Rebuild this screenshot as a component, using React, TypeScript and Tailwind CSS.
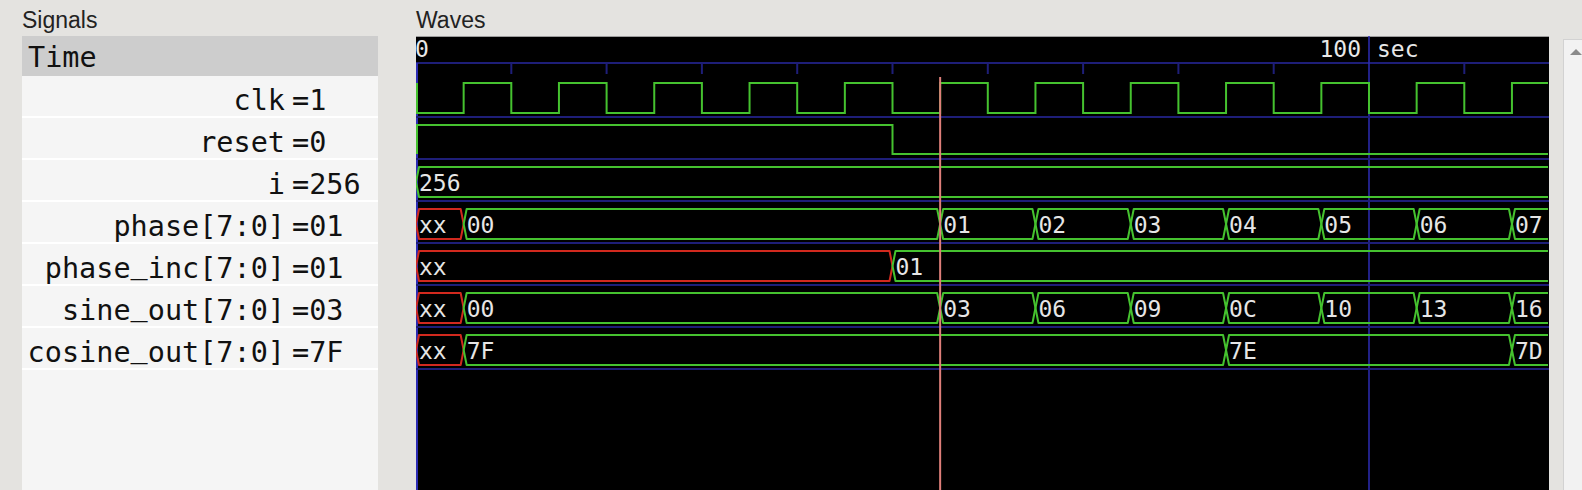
import React from "react";

// time scale of the wave view: 0 sec sits at x=416, 100 sec at x=1369
const X0 = 416;
const XEND = 1548;
const PX_PER_SEC = 9.53;
const tx = (t: number) => X0 + t * PX_PER_SEC;

const GREEN = "#45c22f";
const RED = "#d2291e";
const SEP = "#1e1e78";
const MAJOR = "#2c2cb4";
const CURSOR = "#df7f7a";
const MONO = "DejaVu Sans Mono, monospace";

const ROW_TOP = 76;
const ROW_H = 42;

type Seg = { t0: number; t1?: number; v: string; bad?: boolean };

const signals: { name: string; value: string }[] = [
  { name: "clk", value: "1" },
  { name: "reset", value: "0" },
  { name: "i", value: "256" },
  { name: "phase[7:0]", value: "01" },
  { name: "phase_inc[7:0]", value: "01" },
  { name: "sine_out[7:0]", value: "03" },
  { name: "cosine_out[7:0]", value: "7F" },
];

const counting = (start: number, vals: string[]): Seg[] =>
  vals.map((v, k) => ({
    t0: start + k * 10,
    t1: k === vals.length - 1 ? undefined : start + (k + 1) * 10,
    v,
  }));

const buses: { row: number; segs: Seg[] }[] = [
  { row: 2, segs: [{ t0: 0, v: "256" }] },
  {
    row: 3,
    segs: [
      { t0: 0, t1: 5, v: "xx", bad: true },
      { t0: 5, t1: 55, v: "00" },
      ...counting(55, ["01", "02", "03", "04", "05", "06", "07"]),
    ],
  },
  {
    row: 4,
    segs: [
      { t0: 0, t1: 50, v: "xx", bad: true },
      { t0: 50, v: "01" },
    ],
  },
  {
    row: 5,
    segs: [
      { t0: 0, t1: 5, v: "xx", bad: true },
      { t0: 5, t1: 55, v: "00" },
      ...counting(55, ["03", "06", "09", "0C", "10", "13", "16"]),
    ],
  },
  {
    row: 6,
    segs: [
      { t0: 0, t1: 5, v: "xx", bad: true },
      { t0: 5, t1: 85, v: "7F" },
      { t0: 85, t1: 115, v: "7E" },
      { t0: 115, v: "7D" },
    ],
  },
];

function Bus({ row, segs }: { row: number; segs: Seg[] }) {
  const top = ROW_TOP + row * ROW_H;
  const hi = top + 7;
  const lo = top + 37;
  const mid = top + 22;
  return (
    <g>
      {segs.map((s, i) => {
        const x0 = tx(s.t0);
        const x1 = s.t1 === undefined ? XEND : tx(s.t1);
        const d =
          s.t1 === undefined
            ? `M${x1},${hi} L${x0 + 3},${hi} L${x0},${mid} L${x0 + 3},${lo} L${x1},${lo}`
            : `M${x0},${mid} L${x0 + 3},${hi} L${x1 - 3},${hi} L${x1},${mid} L${x1 - 3},${lo} L${x0 + 3},${lo} Z`;
        return (
          <g key={i}>
            <path d={d} fill="none" stroke={s.bad ? RED : GREEN} strokeWidth={2} strokeLinejoin="round" />
            <text x={x0 + 3} y={mid + 8.5} fontSize={23} fontFamily={MONO} fill="#e6e6e6">
              {s.v}
            </text>
          </g>
        );
      })}
    </g>
  );
}

function clockPath() {
  const top = ROW_TOP;
  const hi = top + 7;
  const lo = top + 37;
  let d = `M${X0 + 1},${hi} L${X0 + 1},${lo}`;
  let level = lo;
  for (let t = 5; ; t += 5) {
    const x = tx(t);
    if (x > XEND) {
      d += ` L${XEND},${level}`;
      break;
    }
    const next = t % 10 === 5 ? hi : lo;
    d += ` L${x},${level} L${x},${next}`;
    level = next;
  }
  return d;
}

function resetPath() {
  const top = ROW_TOP + ROW_H;
  const hi = top + 7;
  const lo = top + 36;
  const x = tx(50);
  return `M${X0 + 1},${lo} L${X0 + 1},${hi} L${x},${hi} L${x},${lo} L${XEND},${lo}`;
}

function Waves() {
  const ticks = [10, 20, 30, 40, 50, 60, 70, 80, 90, 110];
  return (
    <svg width={1133} height={454} viewBox="416 36 1133 454" className="block">
      <rect x={416} y={36} width={1133} height={454} fill="#000" />
      <rect x={416} y={36} width={1133} height={1} fill="#9c9c9c" />

      {/* time axis */}
      <text x={X0 - 1} y={57} fontSize={23} fontFamily={MONO} fill="#e8e8e8">
        0
      </text>
      <text x={tx(100) - 8} y={57} fontSize={23} fontFamily={MONO} fill="#e8e8e8" textAnchor="end">
        100
      </text>
      <text x={tx(100) + 8} y={57} fontSize={23} fontFamily={MONO} fill="#e8e8e8">
        sec
      </text>
      <line x1={416} y1={63} x2={1549} y2={63} stroke={SEP} strokeWidth={2} />
      {ticks.map((t) => (
        <line key={t} x1={tx(t)} y1={63} x2={tx(t)} y2={74} stroke={SEP} strokeWidth={2} />
      ))}
      <line x1={417} y1={63} x2={417} y2={490} stroke={MAJOR} strokeWidth={2} />
      <line x1={tx(100)} y1={36} x2={tx(100)} y2={490} stroke={MAJOR} strokeWidth={1.5} />

      {/* row separators */}
      {signals.map((_, i) => (
        <line
          key={i}
          x1={416}
          y1={ROW_TOP + i * ROW_H + 41}
          x2={1549}
          y2={ROW_TOP + i * ROW_H + 41}
          stroke={SEP}
          strokeWidth={2}
        />
      ))}

      <path d={clockPath()} fill="none" stroke={GREEN} strokeWidth={2} />
      <path d={resetPath()} fill="none" stroke={GREEN} strokeWidth={2} />
      {buses.map((b) => (
        <Bus key={b.row} row={b.row} segs={b.segs} />
      ))}

      {/* marker */}
      <line x1={tx(55)} y1={77} x2={tx(55)} y2={490} stroke={CURSOR} strokeWidth={2} />
    </svg>
  );
}

// underscores sit on the baseline in the original font, so lift them a bit
function SigName({ name }: { name: string }) {
  const parts = name.split("_");
  return (
    <>
      {parts.map((p, i) => (
        <span key={i}>
          {i > 0 && <span className="relative -top-[5px]">_</span>}
          {p}
        </span>
      ))}
    </>
  );
}

export default function App() {
  return (
    <div className="flex h-[490px] w-[1582px] overflow-hidden bg-[#e4e3e0] pl-[22px]">
      {/* signal list */}
      <div className="flex w-[356px] flex-col">
        <div className="h-[36px] pt-[2px] font-['Liberation_Sans',sans-serif] text-[23px] leading-[36px] text-[#222]">
          Signals
        </div>
        <div className="flex-1 bg-[#f5f5f5] font-['DejaVu_Sans_Mono',monospace] text-[28.5px] leading-none text-[#111]">
          <div className="h-[40px] bg-[#cdcdcd] pl-[6px] pt-[8px]">Time</div>
          {signals.map((s) => (
            <div key={s.name} className="flex h-[42px] border-b-2 border-white pt-[11px] whitespace-pre">
              <span className="w-[263px] text-right">
                <SigName name={s.name} />
              </span>
              <span className="ml-[7px]">={s.value}</span>
            </div>
          ))}
        </div>
      </div>

      {/* waves */}
      <div className="ml-[38px] flex w-[1133px] flex-col">
        <div className="h-[36px] pt-[2px] font-['Liberation_Sans',sans-serif] text-[23px] leading-[36px] text-[#222]">
          Waves
        </div>
        <Waves />
      </div>

      {/* vertical scrollbar */}
      <div className="ml-[14px] mt-[39px] flex w-[19px] justify-center border-l border-t border-[#d2d2d2] bg-[#f2f2f2] pt-[9px]">
        <div className="ml-[6px] h-0 w-0 border-x-[6px] border-b-[6px] border-x-transparent border-b-[#8a8a8a]" />
      </div>
    </div>
  );
}
